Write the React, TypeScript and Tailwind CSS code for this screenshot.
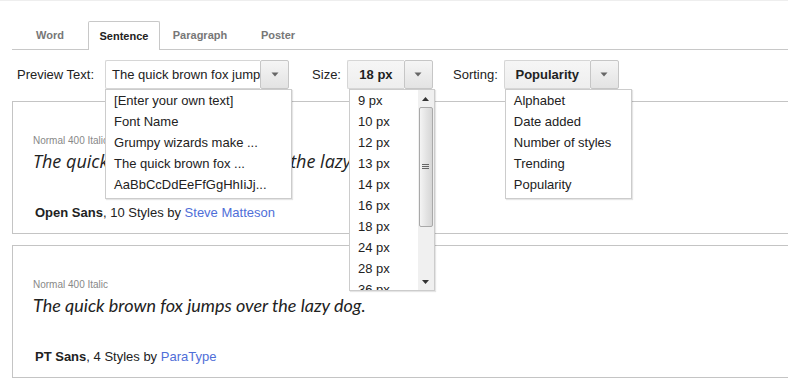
import React from "react";

const Arrow = () => (
  <svg width="8" height="5" viewBox="0 0 8 5">
    <path d="M0.5 0.5 H7.5 L4 4.5 Z" fill="#666" />
  </svg>
);

const Btn = () => (
  <div className="flex h-[29px] w-[29px] items-center justify-center rounded-[2px] border border-[#c6c6c6] bg-gradient-to-b from-[#f5f5f5] to-[#e3e3e3]">
    <Arrow />
  </div>
);

const Item = ({ children }: { children: React.ReactNode }) => (
  <div className="h-[21px] leading-[21px] whitespace-nowrap">{children}</div>
);

function Card({
  font,
  name,
  styles,
  author,
}: {
  font: string;
  name: string;
  styles: string;
  author: string;
}) {
  return (
    <div className="ml-[12px] w-[800px] border border-[#c4c4c4] pl-[20px] pt-[33px] pb-[12px]">
      <div className="h-[12px] text-[10px] leading-[12px] text-[#888]">Normal 400 Italic</div>
      <div className={`mt-[2px] h-[24px] text-[18px] italic leading-[24px] text-[#222] ${font}`}>
        The quick brown fox jumps over the lazy dog.
      </div>
      <div className="mt-[32px] h-[16px] pl-[2px] text-[13px] leading-[16px] text-[#222]">
        <span className="font-bold">{name}</span>, {styles} Styles by{" "}
        <span className="text-[#4f6ed8]">{author}</span>
      </div>
    </div>
  );
}

export default function App() {
  return (
    <div className="relative h-[384px] w-full overflow-hidden bg-white font-['Liberation_Sans',Arial,sans-serif] text-[#222]">
      <div className="h-[1px] bg-[#eeeeee]" />
      {/* tabs */}
      <div className="ml-[12px] mt-[20px] flex h-[29px] border-b border-[#c8c8c8] text-[11px] font-bold">
        <div className="flex h-[28px] w-[76px] items-center justify-center text-[#777]">Word</div>
        <div className="flex h-[29px] w-[72px] items-center justify-center rounded-t-[2px] border border-b-0 border-[#c8c8c8] bg-white text-[#222]">
          Sentence
        </div>
        <div className="flex h-[28px] w-[80px] items-center justify-center text-[#777]">Paragraph</div>
        <div className="flex h-[28px] w-[76px] items-center justify-center text-[#777]">Poster</div>
      </div>

      {/* controls */}
      <div className="mt-[10px] flex h-[29px] items-center pl-[17px] text-[13px]">
        <span className="mr-[11px]">Preview Text:</span>
        <div className="relative flex">
          <div className="h-[29px] w-[155px] overflow-hidden whitespace-nowrap rounded-l-[2px] border border-r-0 border-[#d6d6d6] bg-white pl-[6px] leading-[27px]">
            The quick brown fox jumps over the lazy dog.
          </div>
          <Btn />
          <div className="absolute left-0 top-[29px] z-10 w-[187px] border border-[#cccccc] bg-white pl-[8px] pb-[3px] shadow-[1px_1px_1px_rgba(0,0,0,0.1)]">
            <Item>[Enter your own text]</Item>
            <Item>Font Name</Item>
            <Item>Grumpy wizards make ...</Item>
            <Item>The quick brown fox ...</Item>
            <Item>AaBbCcDdEeFfGgHhIiJj...</Item>
          </div>
        </div>

        <span className="ml-[23px] mr-[6px]">Size:</span>
        <div className="relative flex">
          <div className="flex h-[29px] w-[57px] items-center justify-center rounded-l-[2px] border border-r-0 border-[#d6d6d6] bg-gradient-to-b from-[#f6f6f6] to-[#eeeeee] font-bold">
            18 px
          </div>
          <Btn />
          <div className="absolute left-[2px] top-[29px] z-10 flex h-[202px] w-[86px] overflow-hidden border border-[#cccccc] bg-white shadow-[1px_1px_1px_rgba(0,0,0,0.1)]">
            <div className="flex-1 pl-[8px]">
              <Item>9 px</Item>
              <Item>10 px</Item>
              <Item>12 px</Item>
              <Item>13 px</Item>
              <Item>14 px</Item>
              <Item>16 px</Item>
              <Item>18 px</Item>
              <Item>24 px</Item>
              <Item>28 px</Item>
              <Item>36 px</Item>
            </div>
            <div className="flex w-[16px] flex-col bg-[#f0f0f0]">
              <div className="flex h-[17px] items-center justify-center">
                <svg width="7" height="4" viewBox="0 0 7 4">
                  <path d="M0 4 L3.5 0 L7 4 Z" fill="#333" />
                </svg>
              </div>
              <div className="mx-[1px] flex h-[120px] items-center justify-center rounded-[2px] border border-[#a9a9a9] bg-gradient-to-r from-[#f4f4f4] via-[#e4e4e4] to-[#d6d6d6]">
                <svg width="7" height="6" viewBox="0 0 7 6">
                  <path d="M0 0.5 H7 M0 2.5 H7 M0 4.5 H7" stroke="#666" strokeWidth="1" />
                </svg>
              </div>
              <div className="flex-1" />
              <div className="flex h-[17px] items-center justify-center">
                <svg width="7" height="4" viewBox="0 0 7 4">
                  <path d="M0 0 L7 0 L3.5 4 Z" fill="#333" />
                </svg>
              </div>
            </div>
          </div>
        </div>

        <span className="ml-[20px] mr-[6px]">Sorting:</span>
        <div className="relative flex">
          <div className="flex h-[29px] w-[86px] items-center justify-center rounded-l-[2px] border border-r-0 border-[#d6d6d6] bg-gradient-to-b from-[#f6f6f6] to-[#eeeeee] font-bold">
            Popularity
          </div>
          <Btn />
          <div className="absolute left-[1px] top-[29px] z-10 w-[127px] border border-[#cccccc] bg-white pl-[8px] pb-[3px] shadow-[1px_1px_1px_rgba(0,0,0,0.1)]">
            <Item>Alphabet</Item>
            <Item>Date added</Item>
            <Item>Number of styles</Item>
            <Item>Trending</Item>
            <Item>Popularity</Item>
          </div>
        </div>
      </div>

      {/* cards */}
      <div className="mt-[12px]">
        <Card font="font-['Open_Sans',sans-serif]" name="Open Sans" styles="10" author="Steve Matteson" />
      </div>
      <div className="mt-[11px]">
        <Card font="font-['Lato',sans-serif]" name="PT Sans" styles="4" author="ParaType" />
      </div>
    </div>
  );
}
